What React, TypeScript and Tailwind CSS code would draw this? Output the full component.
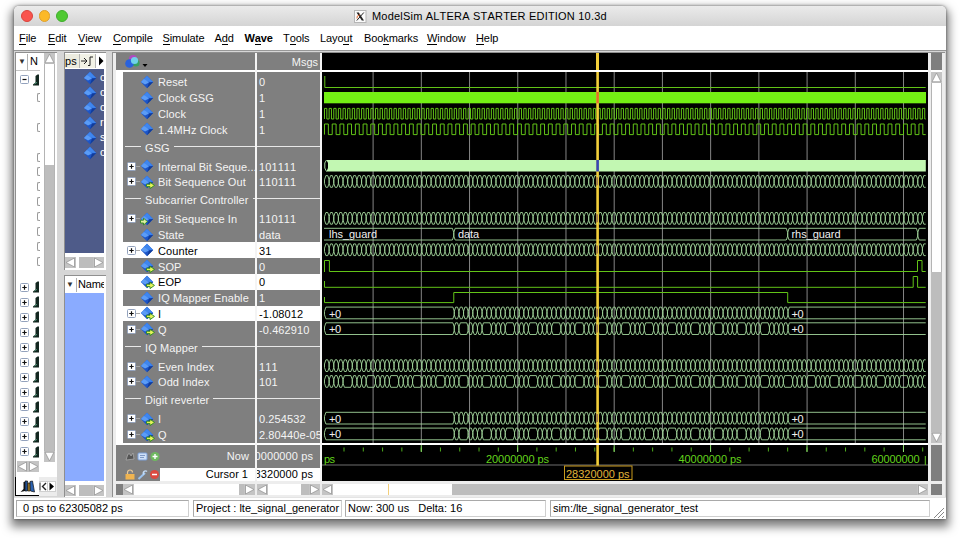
import React from 'react';

type Dir = 'none' | 'out' | 'in';
type Row =
  | { kind: 'div'; label: string }
  | { kind: 'sig'; label: string; value: string; plus?: boolean; dir?: Dir; sel?: boolean };

const rows: Row[] = [
  { kind: 'sig', label: 'Reset', value: '0' },
  { kind: 'sig', label: 'Clock GSG', value: '1' },
  { kind: 'sig', label: 'Clock', value: '1' },
  { kind: 'sig', label: '1.4MHz Clock', value: '1' },
  { kind: 'div', label: 'GSG' },
  { kind: 'sig', label: 'Internal Bit Seque...', value: '101111', plus: true },
  { kind: 'sig', label: 'Bit Sequence Out', value: '110111', plus: true, dir: 'out' },
  { kind: 'div', label: 'Subcarrier Controller' },
  { kind: 'sig', label: 'Bit Sequence In', value: '110111', plus: true, dir: 'in' },
  { kind: 'sig', label: 'State', value: 'data' },
  { kind: 'sig', label: 'Counter', value: '31', plus: true, sel: true },
  { kind: 'sig', label: 'SOP', value: '0', dir: 'out' },
  { kind: 'sig', label: 'EOP', value: '0', dir: 'out', sel: true },
  { kind: 'sig', label: 'IQ Mapper Enable', value: '1' },
  { kind: 'sig', label: 'I', value: '-1.08012', plus: true, dir: 'out', sel: true },
  { kind: 'sig', label: 'Q', value: '-0.462910', plus: true, dir: 'out' },
  { kind: 'div', label: 'IQ Mapper' },
  { kind: 'sig', label: 'Even Index', value: '111', plus: true },
  { kind: 'sig', label: 'Odd Index', value: '101', plus: true },
  { kind: 'div', label: 'Digit reverter' },
  { kind: 'sig', label: 'I', value: '0.254532', plus: true, dir: 'out' },
  { kind: 'sig', label: 'Q', value: '2.80440e-05', plus: true, dir: 'out' },
];

function Diamond({ dir = 'none' }: { dir?: Dir }) {
  return (
    <svg width="15" height="14" viewBox="0 0 15 14" className="shrink-0">
      <path d="M7 0.8 L13.2 7 L7 13.2 L0.8 7Z" fill="#1c55c8" />
      <path d="M7 0.8 L13.2 7 L7 6.8 L4 3.8Z" fill="#3f86ee" />
      <path d="M0.8 7 L4 3.8 L9 7.5 L5 9.5Z" fill="#5b9cf6" />
      <path d="M7 13.2 L13.2 7 L9 7.8Z" fill="#123c98" />
      {dir === 'out' && <path d="M6.5 9.2h3.5v-2l4.5 3.2l-4.5 3.2v-2h-3.5z" fill="#e6f25a" stroke="#2f8a20" strokeWidth="0.9" />}
      {dir === 'in' && <path d="M0.5 8.2h3v-2l4 3.4l-4 3.4v-2h-3z" fill="#dff0a0" stroke="#2f8a20" strokeWidth="0.9" />}
    </svg>
  );
}

function Plus({ minus = false }: { minus?: boolean }) {
  return (
    <svg width="9" height="9" viewBox="0 0 9 9" className="shrink-0">
      <rect x="0.5" y="0.5" width="8" height="8" rx="1" fill="#fff" stroke="#93a2bd" />
      <path d={minus ? 'M2.5 4.5h4' : 'M2.3 4.5h4.4M4.5 2.3v4.4'} stroke="#111" strokeWidth="1.2" />
    </svg>
  );
}

function Arrow({ to }: { to: 'l' | 'r' | 'u' | 'd' }) {
  const d = { l: 'M1 5.5L9.5 1v9z', r: 'M10 5.5L1.5 1v9z', u: 'M5.5 1L10 9.8H1z', d: 'M5.5 10L10 1.2H1z' }[to];
  return (
    <svg width="11" height="11" viewBox="0 0 11 11" className="shrink-0 bg-[#c4c4c4]">
      <path d={d} fill="#fff" stroke="#979797" strokeWidth="0.8" />
    </svg>
  );
}

function HScroll({ w, thumb }: { w: string; thumb: string }) {
  return (
    <div className={`flex h-[11px] shrink-0 bg-[#bdbdbd] ${w}`}>
      <Arrow to="l" />
      <div className={`h-full bg-white ${thumb}`} />
      <div className="flex-1" />
      <Arrow to="r" />
    </div>
  );
}

const menus: [string, string, string, string][] = [
  ['', 'F', 'ile', 'w-[29px]'],
  ['', 'E', 'dit', 'w-[30px]'],
  ['', 'V', 'iew', 'w-[35px]'],
  ['', 'C', 'ompile', 'w-[49.5px]'],
  ['', 'S', 'imulate', 'w-[52px]'],
  ['A', 'd', 'd', 'w-[30px]'],
  ['W', 'a', 've', 'w-[38.5px] font-bold'],
  ['T', 'o', 'ols', 'w-[37px]'],
  ['Layo', 'u', 't', 'w-[44px]'],
  ['Boo', 'k', 'marks', 'w-[63px]'],
  ['', 'W', 'indow', 'w-[49px]'],
  ['', 'H', 'elp', 'w-[40px]'],
];

// Wave canvas: origin is the top left of the plot, in window pixels
const OX = 322;
const OY = 72;
const START = 324.5;
const END = 925.7;
const CELL = 4.635;
const DATA = START + 28 * CELL - 0.5;
const RHS = START + 100 * CELL - 0.3;
const LAST = START + 128 * CELL;

function clockPath(yc: number, period: number) {
  const hi = yc - 5.2;
  const lo = yc + 5.4;
  let d = '';
  for (let x = START; x < END; x += period) {
    const m = Math.min(x + period / 2, END);
    const e = Math.min(x + period, END);
    d += `M${x.toFixed(2)} ${lo}V${hi}H${m.toFixed(2)}V${lo}H${e.toFixed(2)}`;
  }
  return d;
}

function bounds(from: number, to: number, skip: boolean) {
  const out: number[] = [];
  for (let i = from; i <= to; i++) if (!(skip && i % 5 === 0 && i !== from && i !== to)) out.push(START + i * CELL);
  return out;
}

function busPath(yc: number, edges: number[]) {
  const t = yc - 5.7;
  const b = yc + 6;
  const s = 1.4;
  let d = '';
  for (let i = 0; i < edges.length; i++) {
    const x0 = edges[i];
    if (x0 >= END) break;
    const closed = i + 1 < edges.length;
    const x1 = closed ? edges[i + 1] : END;
    const xe = closed ? x1 - s : x1;
    d += `M${xe} ${t}H${x0 + s}L${x0} ${yc - 1.5}V${yc + 2}L${x0 + s} ${b}H${xe}`;
    if (closed) d += `L${x1} ${yc + 2}V${yc - 1.5}L${xe} ${t}`;
  }
  return d;
}

const allCells = bounds(0, 129, false);
const oddCells = bounds(0, 129, true);
const iCells = [START, ...bounds(28, 100, false)];
const qCells = [START, ...bounds(28, 100, true)];
const grid = Array.from({ length: 12 }, (_, k) => 373.1 + 48.22 * k);

function Waves() {
  const bus = '#a3d69c';
  const sig = '#62c417';
  return (
    <svg width="606" height="371" viewBox={`${OX} ${OY} 606 371`} className="block bg-black tracking-normal" fontFamily="'Liberation Sans', Arial, sans-serif" fontSize="11">
      {grid.map((x) => (
        <path key={x} d={`M${x} 72V443`} stroke="#858585" strokeWidth="1" />
      ))}
      <g fill="none" stroke={sig} strokeWidth="1">
        <path d={`M${START + 0.3} 76V87.5H${END}`} />
        <path d={clockPath(113.6, CELL)} />
        <path d={clockPath(129.2, 7.72)} />
        <path d={`M324.5 272V260.5H329.4V271.5H917.5V260.5H922V271.5H${END}`} />
        <path d={`M324.5 281V287.3H913.2V276.5H917.6V287.3H${END}`} />
        <path d={`M324.5 297V302.6H${DATA}V292.5H${RHS}V302.6H${END}`} />
      </g>
      <rect x="324" y="92" width="602" height="11.3" fill="#74f014" />
      <path d="M326.5 160L324.8 163V168L326.5 171.5" stroke={bus} fill="none" />
      <path d="M326.5 160H925.8V171.5H326.5L328 168V163Z" fill="#c2f7b2" />
      <g fill="none" stroke={bus} strokeWidth="0.9">
        <path d={busPath(181.3, allCells)} />
        <path d={busPath(218.2, allCells)} />
        <path d={busPath(234, [START - 4, DATA, RHS, LAST])} />
        <path d={busPath(249.6, allCells)} />
        <path d={busPath(312.8, iCells)} />
        <path d={busPath(328.5, qCells)} />
        <path d={busPath(365.5, allCells)} />
        <path d={busPath(381.3, oddCells)} />
        <path d={busPath(418, iCells)} />
        <path d={busPath(433.8, qCells)} />
      </g>
      <path d="M322 226V243H324V226Z" fill="#000" />
      <g fill="#f0f0f0">
        <text x="329" y="238" textLength="48">lhs_guard</text>
        <text x="458" y="238" textLength="21">data</text>
        <text x="791.5" y="238" textLength="49">rhs_guard</text>
        {[317.5, 333.2, 422.8, 438.4].map((y) => (
          <g key={y}>
            <text x="329" y={y} textLength="12">+0</text>
            <text x="791.5" y={y} textLength="12">+0</text>
          </g>
        ))}
      </g>
      <path d="M597.6 72V443" stroke="#f3cf3a" strokeWidth="2.6" />
      <path d="M597.6 92V103.3" stroke="#e0702a" strokeWidth="2.6" />
      <path d="M597.6 160V171.5" stroke="#3448b8" strokeWidth="2.6" />
      {[181.3, 218.2, 249.6, 312.8, 328.5, 365.5, 381.3, 418, 433.8].map((y) => (
        <path key={y} d={`M597.2 ${y - 4}V${y + 4}`} stroke="#a07a50" strokeWidth="1.6" />
      ))}
    </svg>
  );
}

function Ruler() {
  const ticks = Array.from({ length: 31 }, (_, i) => 344 + 19.29 * i).filter((x) => x < 926);
  return (
    <svg width="606" height="36" viewBox="322 445 606 36" className="block bg-black tracking-normal" fontFamily="'Liberation Sans', Arial, sans-serif" fontSize="11">
      {ticks.map((x) => (
        <path key={x} d={`M${x} 447.5V451.5`} stroke="#4fae1e" strokeWidth="1" />
      ))}
      {[421.3, 517.7, 614.2, 710.6, 807, 903.5].map((x) => (
        <path key={x} d={`M${x} 445V452`} stroke="#8ddc70" strokeWidth="1" />
      ))}
      <path d="M322 465H928" stroke="#8c8c8c" strokeWidth="0.8" />
      <path d="M925.3 456V465" stroke="#5fc522" strokeWidth="1" />
      <g fill="#63d41c">
        <text x="324" y="463" textLength="11">ps</text>
        <text x="486" y="463" textLength="63">20000000 ps</text>
        <text x="678.5" y="463" textLength="63">40000000 ps</text>
        <text x="871.5" y="463" textLength="48">60000000</text>
      </g>
      <rect x="564.5" y="466" width="67.5" height="13.5" fill="#000" stroke="#c99a1c" />
      <text x="566" y="477.8" textLength="63.5" fill="#e0b53a">28320000 ps</text>
      <path d="M597.6 445V465.5" stroke="#f3cf3a" strokeWidth="2.6" />
    </svg>
  );
}

function LibIcon() {
  return (
    <svg width="7" height="12" viewBox="0 0 7 12" className="shrink-0">
      <path d="M0 11.5V10.5L2.5 8.5V2L4.5 0.5H6V11.5Z" fill="#12261f" />
      <path d="M1.5 10L4 8.3" stroke="#4c9b7b" strokeWidth="0.9" />
    </svg>
  );
}

function TreePanel() {
  return (
    <div className="flex w-[42px] shrink-0 flex-col">
      <div className="flex h-[425px] border-t border-l border-[#8f8f8f] bg-white">
        <div className="flex w-[24px] flex-col overflow-hidden">
          <div className="flex h-[18px] shrink-0 items-center border-b border-[#c4c4c4]">
            <span className="w-[12px] shrink-0 border-r border-[#b0b0b0] pl-[2px] text-[8px] leading-[16px] text-[#333]">▼</span>
            <span className="pl-[2px]">N</span>
          </div>
          <div className="flex h-[17px] shrink-0 items-center gap-[4px] pl-[4px]">
            <Plus minus />
            <LibIcon />
          </div>
          <div className="flex h-[192px] shrink-0 flex-col items-end pt-[2px]">
            {[1, 0, 1, 0, 1, 1, 1, 1, 1, 1, 1, 1].map((on, i) => (
              <div key={i} className="flex h-[14.9px] w-[3px] items-center">
                {on ? <div className="h-[9px] w-[4px] rounded-l-[2px] border-y border-l border-[#9a9a9a]" /> : null}
              </div>
            ))}
          </div>
          {Array.from({ length: 12 }, (_, i) => (
            <div key={i} className="flex h-[14.95px] shrink-0 items-center gap-[4px] pl-[4px]">
              <Plus />
              <LibIcon />
            </div>
          ))}
        </div>
        <div className="ml-[4px] flex h-[409px] w-[11px] flex-col border-x border-[#b4b4b4] bg-[#bdbdbd]">
          <div className="-mx-px">
            <Arrow to="u" />
          </div>
          <div className="h-[101px] bg-white" />
          <div className="flex-1" />
          <div className="-mx-px">
            <Arrow to="d" />
          </div>
        </div>
      </div>
      <div className="-mt-[16px] flex h-[16px] items-start border-l border-[#8f8f8f] pl-px">
        <Arrow to="l" />
        <Arrow to="r" />
      </div>
      <div className="flex h-[19px] items-center bg-[#ececec]">
        <div className="flex h-[19px] w-[24px] items-center border-b border-l border-black bg-white pl-[4px]">
          <svg width="16" height="14" viewBox="0 0 16 14">
            <path d="M0.5 13L3.5 10V3H5V12Z" fill="#111" />
            <path d="M5 12V2H7.5V12Z" fill="#1f4d8f" stroke="#111" strokeWidth="0.7" />
            <path d="M8 12V4H10V12Z" fill="#c99a2c" stroke="#111" strokeWidth="0.7" />
            <path d="M10.5 12L10 2.5L12.5 2L14.5 13Z" fill="#2b62b0" stroke="#111" strokeWidth="0.7" />
          </svg>
        </div>
        <div className="flex h-[11px] w-[8px] items-center justify-end border-y border-[#cfcfcf] bg-white">
          <svg width="8" height="9" viewBox="0 0 8 9">
            <path d="M1 0.5V8.5" stroke="#222" />
            <path d="M7 1L3.5 4.5L7 8" fill="none" stroke="#222" strokeWidth="1.4" />
          </svg>
        </div>
        <div className="flex h-[11px] w-[9px] items-center justify-center border border-[#cfcfcf] bg-white">
          <svg width="5" height="9" viewBox="0 0 5 9">
            <path d="M0.5 0.5L5 4.5L0.5 8.5Z" fill="#000" />
          </svg>
        </div>
      </div>
    </div>
  );
}

function ObjectsPanel() {
  return (
    <div className="flex w-[42px] shrink-0 flex-col">
      <div className="flex h-[218px] flex-col border-t border-l border-[#8f8f8f] bg-white">
        <div className="flex h-[16px] items-center">
          <span className="h-[14px] w-[14px] bg-[#ecebdf] text-[11px] leading-[14px] tracking-[0.2px]">ps</span>
          <div className="flex h-[14px] w-[17px] items-center justify-center border-x border-[#b5b5b5] bg-[#f2f2e6]">
            <svg width="13" height="10" viewBox="0 0 13 10">
              <path d="M0 5H5M3 2L6 5L3 8M7 9.5H9V1H12" fill="none" stroke="#222" />
            </svg>
          </div>
          <svg width="10" height="10" viewBox="0 0 10 10">
            <path d="M3 0.5L7.5 5L3 9.5Z" fill="#000" />
          </svg>
        </div>
        <div className="flex h-[184px] w-[39px] flex-col bg-[#4e5b89] pt-[1px] text-white">
          {['c', 'c', 'c', 'r', 's', 'c'].map((c, i) => (
            <div key={i} className="flex h-[15px] items-center overflow-hidden pl-[18px]">
              <Diamond />
              <span className="w-[6px] shrink-0 overflow-hidden pl-[2px]">{c}</span>
            </div>
          ))}
        </div>
        <div className="mt-[4px] flex">
          <HScroll w="w-[39px]" thumb="w-[3px]" />
        </div>
      </div>
      <div className="h-[5px] bg-[#d6d6d6]" />
      <div className="flex h-[222px] flex-col border-t border-l border-[#8f8f8f] bg-white">
        <div className="flex h-[17px] items-center overflow-hidden">
          <span className="w-[12px] border-r border-[#b0b0b0] pl-[1px] text-[8px] leading-[14px] text-[#333]">▼</span>
          <span className="w-[27px] overflow-hidden pl-[1px] tracking-[-0.2px]">Name</span>
        </div>
        <div className="h-[188px] w-[39px] bg-[#8aabff]" />
        <div className="mt-[4px] flex">
          <HScroll w="w-[39px]" thumb="w-[3px]" />
        </div>
      </div>
    </div>
  );
}

function NamesColumn() {
  return (
    <div className="flex w-[139px] shrink-0 flex-col bg-[#7f7f7f] text-[#f4f4f4]">
      <div className="flex h-[17px] shrink-0 items-center pl-[8px]">
        <svg width="24" height="15" viewBox="0 0 24 15">
          <circle cx="9" cy="5" r="4" fill="#b04ac0" />
          <circle cx="12" cy="9" r="3.6" fill="#37a060" />
          <circle cx="5.5" cy="9.5" r="4.3" fill="#2a62dc" />
          <circle cx="10.5" cy="6.5" r="3.6" fill="#6fd2ea" />
          <path d="M18.5 10h5l-2.5 3z" fill="#000" />
        </svg>
      </div>
      <div className="h-[2px] shrink-0 bg-white" />
      <div className="flex h-[371px] shrink-0 border-l-[7px] border-white">
        <div className="flex flex-1 flex-col pt-[2px]">
          {rows.map((r, i) =>
            r.kind === 'div' ? (
              <div key={i} className="flex h-[21.17px] shrink-0 items-center pl-[2px] leading-[15px]">
                <div className="mb-[3px] h-px w-[16px] shrink-0 bg-[#e8e8e8]" />
                <span className="mt-px px-[4px] whitespace-nowrap">{r.label}</span>
                <div className="mb-[3px] h-px flex-1 bg-[#e8e8e8]" />
              </div>
            ) : (
              <div key={i} className={`flex h-[15.78px] shrink-0 items-center pl-[4px] leading-[15px] whitespace-nowrap ${r.sel ? 'bg-white text-black' : ''}`}>
                <div className="flex w-[13px] items-center">
                  {r.plus ? <Plus /> : null}
                  {r.plus ? <div className="h-px w-[4px] bg-[#a9a9a9]" /> : null}
                </div>
                <Diamond dir={r.dir} />
                <span className="mt-[2px] pl-[3px]">{r.label}</span>
              </div>
            ),
          )}
        </div>
      </div>
      <div className="h-[2px] shrink-0 bg-white" />
      <div className="flex h-[23px] shrink-0 items-center pl-[9px]">
        <svg width="36" height="13" viewBox="0 0 36 13">
          <path d="M1 10L3 4H5L6 6L8 3L9 9Z" fill="#555" stroke="#bbb" strokeWidth="0.6" />
          <rect x="13" y="3" width="9" height="7" rx="1" fill="#cfe0f8" stroke="#7da0d8" />
          <path d="M15 5.5h5M15 7.5h4" stroke="#6b86b8" strokeWidth="0.8" />
          <circle cx="30" cy="6.5" r="4.5" fill="#6fb860" />
          <path d="M27.5 6.5h5M30 4v5" stroke="#fff" strokeWidth="1.4" />
        </svg>
        <span className="ml-auto pr-[6px]">Now</span>
      </div>
      <div className="flex h-[13px] shrink-0 items-center pl-[9px]">
        <svg width="35" height="13" viewBox="0 0 35 13" className="shrink-0">
          <path d="M2.5 6V4.5a2.5 2.5 0 0 1 5 0" fill="none" stroke="#e8c898" strokeWidth="1.2" />
          <rect x="0.5" y="6" width="9" height="5.5" fill="#f0b450" />
          <path d="M13.5 11L20 5" stroke="#9cc3ee" strokeWidth="2" />
          <path d="M19 6.5a2 2 0 1 1 3-3" stroke="#c4dcf6" strokeWidth="1.4" fill="none" />
          <circle cx="29.5" cy="6.5" r="4.5" fill="#dc4a40" />
          <path d="M27 6.5h5" stroke="#fff" strokeWidth="1.5" />
        </svg>
        <span className="h-[13px] flex-1 bg-white pr-[7px] text-right leading-[12px] tracking-[0px] text-black">Cursor 1</span>
      </div>
      <div className="flex h-[16px] shrink-0 items-center bg-[#ededed]">
        <div className="h-[11px] w-[7px] bg-[#7f7f7f]" />
        <HScroll w="w-[132px]" thumb="w-[105px]" />
      </div>
    </div>
  );
}

function ValuesColumn() {
  return (
    <div className="flex w-[63px] shrink-0 flex-col bg-[#7f7f7f] text-[#f4f4f4]">
      <div className="h-[17px] shrink-0 pr-[2px] text-right leading-[19px] tracking-[0px]">Msgs</div>
      <div className="h-[2px] shrink-0 bg-white" />
      <div className="flex h-[371px] shrink-0 flex-col overflow-hidden pt-[2px]">
        {rows.map((r, i) =>
          r.kind === 'div' ? (
            <div key={i} className="flex h-[21.17px] shrink-0 items-center">
              <div className="mb-[3px] h-px w-full bg-[#e8e8e8]" />
            </div>
          ) : (
            <div key={i} className={`flex h-[15.78px] shrink-0 items-center pl-[2px] leading-[15px] whitespace-nowrap ${r.sel ? 'bg-white text-black' : ''}`}>
              <span className="mt-[2px]">{r.value}</span>
            </div>
          ),
        )}
      </div>
      <div className="h-[2px] shrink-0 bg-white" />
      <div className="flex h-[23px] shrink-0 items-center justify-end overflow-hidden pr-[7px] whitespace-nowrap">00000000 ps</div>
      <div className="flex h-[13px] shrink-0 items-center justify-end overflow-hidden bg-white pr-[7px] whitespace-nowrap text-black">28320000 ps</div>
      <div className="flex h-[16px] shrink-0 items-center bg-[#ededed]">
        <HScroll w="w-[63px]" thumb="w-[33px]" />
      </div>
    </div>
  );
}

function StatusBox({ w, children }: { w: string; children: React.ReactNode }) {
  return <div className={`h-[17px] overflow-hidden border border-[#cfcfcf] border-t-[#a9a9a9] border-l-[#a9a9a9] bg-white leading-[15px] whitespace-pre ${w}`}>{children}</div>;
}

export default function App() {
  return (
    <div className="h-[540px] w-[960px] overflow-hidden bg-white pt-[6px] pl-[14px] font-['Liberation_Sans',Arial,sans-serif] text-[11px] tracking-[0.1px] text-black [font-kerning:none]">
      <div className="flex h-[513px] w-[932px] flex-col rounded-t-[5px] bg-white shadow-[0_5px_10px_3px_rgba(0,0,0,0.5),0_0_3px_rgba(0,0,0,0.5)]">
        <div className="flex h-[20px] shrink-0 items-center rounded-t-[5px] bg-linear-to-b from-[#ebebeb] to-[#d4d4d4] pl-[7px]">
          <div className="flex w-[333px] gap-[6px]">
            <div className="h-[11.5px] w-[11.5px] rounded-full border border-[#d9433c] bg-[#f9544d]" />
            <div className="h-[11.5px] w-[11.5px] rounded-full border border-[#dea02c] bg-[#fcb928]" />
            <div className="h-[11.5px] w-[11.5px] rounded-full border border-[#3fae2c] bg-[#4fc932]" />
          </div>
          <svg width="13" height="13" viewBox="0 0 13 13" className="shrink-0">
            <rect x="0.5" y="0.5" width="11.5" height="12" fill="#fafafa" stroke="#b5b5b5" />
            <path d="M2.5 2.5H4.8L10 10.5H7.8Z" fill="#222" />
            <path d="M9.8 2.5L2.8 10.5" stroke="#222" />
            <path d="M3 8.5Q2 6 6 4.5" stroke="#e0662e" fill="none" />
          </svg>
          <span className="pl-[5px] text-[11px] leading-[20px] tracking-[0.2px] whitespace-nowrap">ModelSim ALTERA STARTER EDITION 10.3d</span>
        </div>
        <div className="flex h-[24px] shrink-0 items-center pl-[5px] tracking-[-0.1px]">
          {menus.map(([a, u, b, cls]) => (
            <div key={a + u + b} className={`shrink-0 whitespace-nowrap ${cls}`}>
              {a}
              <span className="border-b border-black">{u}</span>
              {b}
            </div>
          ))}
        </div>
        <div className="flex h-[447px] shrink-0 border-t border-[#979797] bg-[#d6d6d6] pt-[1px] pl-[1px]">
          <TreePanel />
          <div className="w-[7px] shrink-0" />
          <ObjectsPanel />
          <div className="w-[6px] shrink-0" />
          <div className="flex h-[445px] w-[833px] border-t border-l border-[#8f8f8f] bg-[#ededed] pl-[3px]">
            <NamesColumn />
            <div className="h-[427px] w-[2px] shrink-0 bg-[#f4f4f4]" />
            <ValuesColumn />
            <div className="h-[427px] w-[2px] shrink-0 bg-[#f4f4f4]" />
            <div className="flex w-[606px] shrink-0 flex-col">
              <div className="flex h-[17px] shrink-0 justify-start bg-black pl-[274.3px]">
                <div className="h-[17px] w-[2.6px] bg-[#f3cf3a]" />
              </div>
              <div className="h-[2px] shrink-0 bg-white" />
              <Waves />
              <div className="h-[2px] shrink-0 bg-white" />
              <Ruler />
              <div className="flex h-[16px] items-center">
                <div className="flex h-[11px] w-[606px] bg-[#bdbdbd]">
                  <Arrow to="l" />
                  <div className="flex h-full w-[119px] bg-white pl-[55px]">
                    <div className="h-full w-px bg-[#f3cf7a]" />
                  </div>
                  <div className="flex-1" />
                  <Arrow to="r" />
                </div>
              </div>
            </div>
            <div className="ml-[3px] flex w-[11px] shrink-0 flex-col">
              <div className="h-[17px] bg-[#7f7f7f]" />
              <div className="h-[2px] bg-white" />
              <div className="flex h-[371px] w-[11px] flex-col bg-[#bdbdbd]">
                <Arrow to="u" />
                <div className="h-[189px] border-x border-[#b4b4b4] bg-white" />
                <div className="flex-1" />
                <Arrow to="d" />
              </div>
              <div className="mt-[2px] h-[36px] bg-[#7f7f7f]" />
              <div className="mt-[3px] h-[11px] bg-[#7f7f7f]" />
            </div>
          </div>
        </div>
        <div className="flex h-[22px] shrink-0 items-center border-t border-[#e4e4e4] bg-white pl-[2px] tracking-[0px]">
          <StatusBox w="w-[173px] pl-[6px]">0 ps to 62305082 ps</StatusBox>
          <StatusBox w="ml-[4px] w-[149px] pl-[2px]">Project : lte_signal_generator</StatusBox>
          <StatusBox w="ml-[3px] w-[201px] pl-[2px]">{'Now: 300 us   Delta: 16'}</StatusBox>
          <StatusBox w="ml-[4px] w-[380px] pl-[2px] tracking-[-0.06px]">sim:/lte_signal_generator_test</StatusBox>
          <svg width="12" height="13" viewBox="0 0 12 13" className="ml-[3px] self-end">
            <path d="M1 12L11 2M5 12L11 6M9 12L11 10" stroke="#888" fill="none" />
          </svg>
        </div>
      </div>
    </div>
  );
}
